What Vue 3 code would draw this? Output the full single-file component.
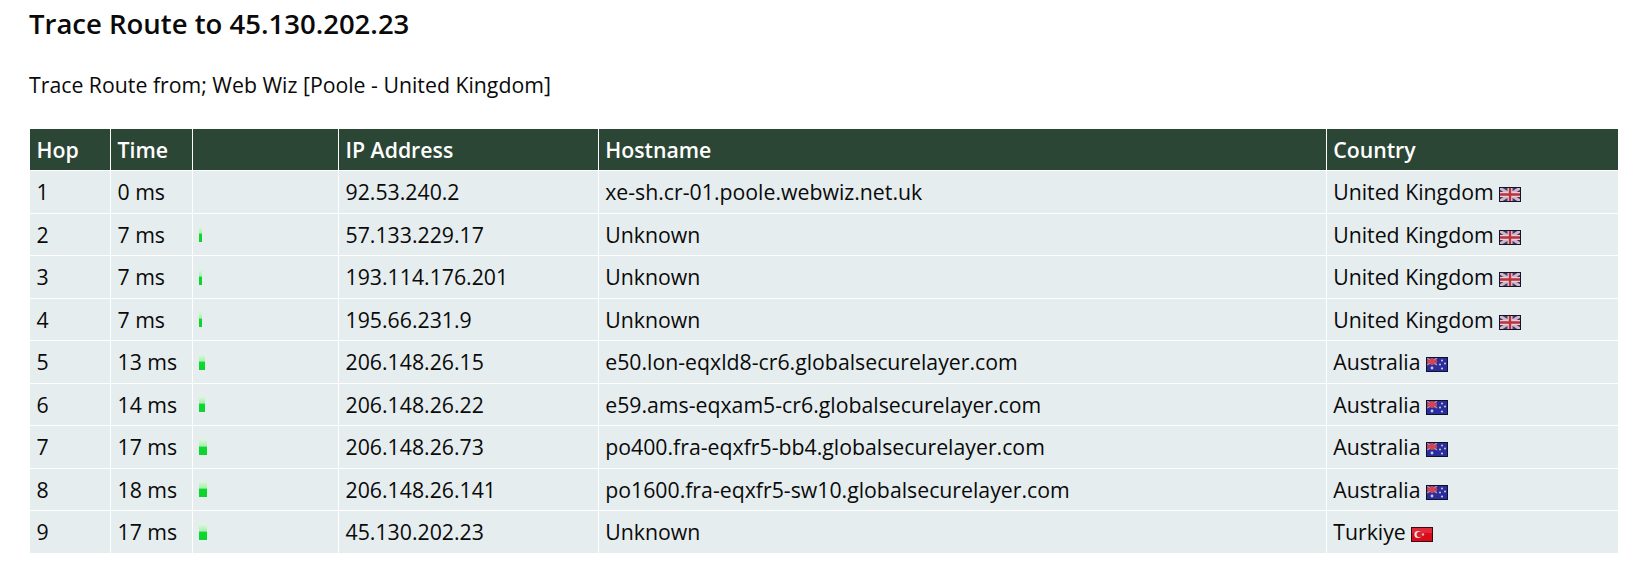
<script setup>
const rows = [
  { hop: 1, ms: 0, ip: '92.53.240.2', host: 'xe-sh.cr-01.poole.webwiz.net.uk', country: 'United Kingdom', flag: 'uk' },
  { hop: 2, ms: 7, ip: '57.133.229.17', host: 'Unknown', country: 'United Kingdom', flag: 'uk' },
  { hop: 3, ms: 7, ip: '193.114.176.201', host: 'Unknown', country: 'United Kingdom', flag: 'uk' },
  { hop: 4, ms: 7, ip: '195.66.231.9', host: 'Unknown', country: 'United Kingdom', flag: 'uk' },
  { hop: 5, ms: 13, ip: '206.148.26.15', host: 'e50.lon-eqxld8-cr6.globalsecurelayer.com', country: 'Australia', flag: 'au' },
  { hop: 6, ms: 14, ip: '206.148.26.22', host: 'e59.ams-eqxam5-cr6.globalsecurelayer.com', country: 'Australia', flag: 'au' },
  { hop: 7, ms: 17, ip: '206.148.26.73', host: 'po400.fra-eqxfr5-bb4.globalsecurelayer.com', country: 'Australia', flag: 'au' },
  { hop: 8, ms: 18, ip: '206.148.26.141', host: 'po1600.fra-eqxfr5-sw10.globalsecurelayer.com', country: 'Australia', flag: 'au' },
  { hop: 9, ms: 17, ip: '45.130.202.23', host: 'Unknown', country: 'Turkiye', flag: 'tr' }
]
const barWidth = (ms) => Math.round(ms * 0.45) + 'px'
</script>

<template>
  <div class="page">
    <h2 class="title">Trace Route to 45.130.202.23</h2>
    <p class="from">Trace Route from; Web Wiz [Poole - United Kingdom]</p>
    <table class="trace">
      <colgroup>
        <col class="c-hop" /><col class="c-time" /><col class="c-bar" /><col class="c-ip" /><col class="c-host" /><col />
      </colgroup>
      <thead>
        <tr>
          <th>Hop</th><th>Time</th><th></th><th>IP Address</th><th>Hostname</th><th>Country</th>
        </tr>
      </thead>
      <tbody>
        <tr v-for="r in rows" :key="r.hop">
          <td>{{ r.hop }}</td>
          <td>{{ r.ms }} ms</td>
          <td class="bar-cell"><span v-if="r.ms" class="bar" :style="{ width: barWidth(r.ms) }"></span></td>
          <td>{{ r.ip }}</td>
          <td>{{ r.host }}</td>
          <td>
            {{ r.country }}
            <svg v-if="r.flag === 'uk'" class="flag" viewBox="0 0 22 15">
              <defs>
                <filter id="soft-uk" x="0" y="0" width="100%" height="100%"><feGaussianBlur stdDeviation="0.6" /></filter>
              </defs>
              <g filter="url(#soft-uk)">
                <rect width="22" height="15" fill="#3f3a6c" />
                <path d="M1 1L21 14M21 1L1 14" stroke="#d2b8c4" stroke-width="3" />
                <path d="M11 1V14M1 7.5H21" stroke="#e4cfd4" stroke-width="5" />
                <path d="M11 1V14M1 7.5H21" stroke="#bc3040" stroke-width="2.4" />
              </g>
              <rect x=".5" y=".5" width="21" height="14" fill="none" stroke="#14142a" />
            </svg>
            <svg v-else-if="r.flag === 'au'" class="flag" viewBox="0 0 22 15">
              <defs>
                <filter id="soft-au" x="0" y="0" width="100%" height="100%"><feGaussianBlur stdDeviation="0.6" /></filter>
              </defs>
              <g filter="url(#soft-au)">
                <rect width="22" height="15" fill="#2c2f9c" />
                <rect x="1" y="1" width="10" height="7" fill="#6a3a78" />
                <path d="M1 1L11 8M11 1L1 8" stroke="#b98aa8" stroke-width="1.5" />
                <path d="M6 1V8M1 4.5H11" stroke="#d9414f" stroke-width="2.4" />
                <circle cx="6" cy="11" r="1.4" fill="#c8c8f0" />
                <circle cx="16" cy="3.5" r="1" fill="#c8c8f0" />
                <circle cx="19" cy="6.5" r="1" fill="#c8c8f0" />
                <circle cx="14" cy="7.5" r="1" fill="#c8c8f0" />
                <circle cx="16" cy="11.5" r="1.1" fill="#c8c8f0" />
              </g>
              <rect x=".5" y=".5" width="21" height="14" fill="none" stroke="#10102a" />
            </svg>
            <svg v-else class="flag" viewBox="0 0 22 15">
              <defs>
                <filter id="soft-tr" x="0" y="0" width="100%" height="100%"><feGaussianBlur stdDeviation="0.6" /></filter>
              </defs>
              <g filter="url(#soft-tr)">
                <rect width="22" height="15" fill="#d8101c" />
                <rect x="1" y="1" width="20" height="5" fill="#e8404a" opacity=".6" />
                <circle cx="7" cy="7.5" r="3.6" fill="#f8e4e4" />
                <circle cx="8.4" cy="7.5" r="2.8" fill="#d8202c" />
                <circle cx="12" cy="7.5" r="1.2" fill="#f0b0b4" />
              </g>
              <rect x=".5" y=".5" width="21" height="14" fill="none" stroke="#3a0a10" />
            </svg>
          </td>
        </tr>
      </tbody>
    </table>
  </div>
</template>

<style>
html, body { margin: 0; background: #fff; }
</style>

<style scoped>
.page {
  padding: 0 26px 0 29px;
  font-family: "Open Sans", "Noto Sans", sans-serif;
  font-size: 21.28px;
  color: #0a0a0a;
}
.title {
  margin: 0;
  padding-top: 4px;
  font-size: 27.5px;
  line-height: 40px;
  font-weight: 600;
}
.from {
  margin: 26px 0 0;
  line-height: 30px;
}
.trace {
  margin-top: 28px;
  width: 100%;
  table-layout: fixed;
  border-collapse: separate;
  border-spacing: 1px;
}
.c-hop { width: 80px; }
.c-time { width: 81px; }
.c-bar { width: 145px; }
.c-ip { width: 258.7px; }
.c-host { width: 727px; }
th {
  background: #2c4636;
  color: #fff;
  text-align: left;
  font-weight: 600;
  padding: 0 6.5px;
  height: 41px;
  box-sizing: border-box;
}
td {
  background: #e6edef;
  padding: 0 6.5px;
  height: 41.5px;
  box-sizing: border-box;
  white-space: nowrap;
}
.bar-cell { padding: 0 5.5px; vertical-align: middle; }
.bar {
  display: block;
  height: 16px;
  background: linear-gradient(to bottom, #e0f8e2 0%, #a8efaf 45%, #08dc2c 50%, #10d030 100%);
}
.flag {
  display: inline-block;
  width: 22px;
  height: 15px;
  vertical-align: -2px;
}
</style>
